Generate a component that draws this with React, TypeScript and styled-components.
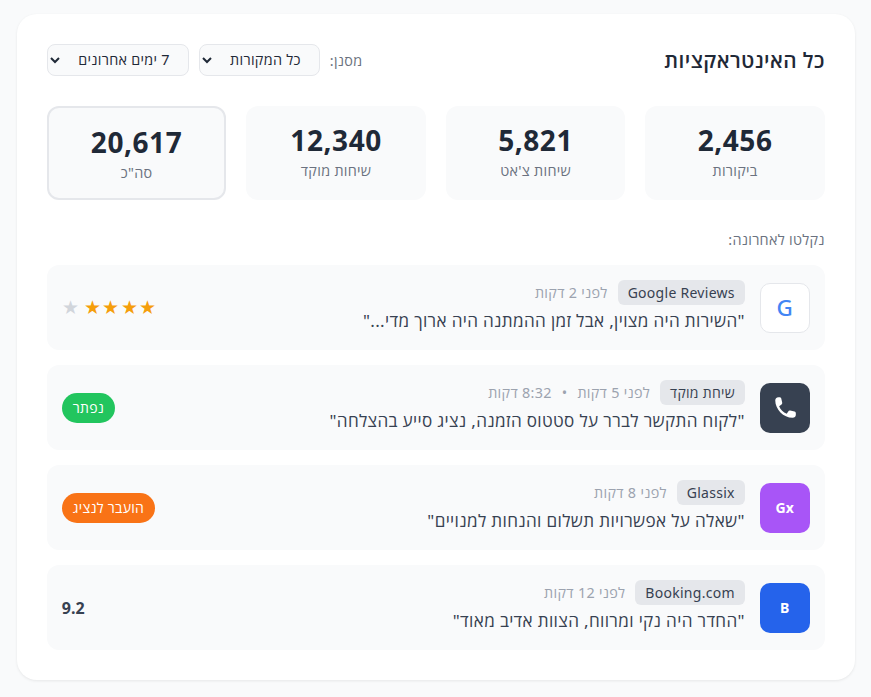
import { createGlobalStyle, styled } from "styled-components";

const Global = createGlobalStyle`
  html, body {
    margin: 0;
    background: #f9fafb;
    font-family: "Noto Sans", "Open Sans", sans-serif;
    color: #1f2937;
  }
  * {
    letter-spacing: 0.02em;
  }
`;

const Page = styled.div`
  padding: 14px 16.2px 16px 16.8px;
`;

const Card = styled.div`
  background: #fff;
  border-radius: 20px;
  padding: 30px;
  box-shadow: 0 1px 3px rgba(0, 0, 0, 0.08);
`;

const Header = styled.div`
  display: flex;
  justify-content: space-between;
  align-items: center;
  margin-bottom: 30px;
`;

const Title = styled.h2`
  margin: 0;
  font-size: 20.8px;
  font-weight: 600;
  color: #1f2937;
`;

const Filters = styled.div`
  display: flex;
  align-items: center;
  gap: 10px;
`;

const FilterLabel = styled.span`
  font-size: 14.4px;
  color: #6b7280;
`;

const Select = styled.select`
  font-family: inherit;
  font-size: 14.4px;
  height: 32px;
  padding: 3px 14px 5px;
  color: #1f2937;
  background: #f9fafb;
  border: 1px solid #e5e7eb;
  border-radius: 8px;
`;

const Stats = styled.div`
  display: grid;
  grid-template-columns: repeat(4, 1fr);
  gap: 20px;
  margin-bottom: 30px;
`;

const Stat = styled.div<{ $total?: boolean }>`
  height: 94px;
  box-sizing: border-box;
  padding-top: 15px;
  display: flex;
  flex-direction: column;
  align-items: center;
  background: #f9fafb;
  border-radius: 12px;
  border: ${(p) => (p.$total ? "2px solid #e5e7eb" : "none")};
`;

const StatValue = styled.div`
  font-size: 28px;
  line-height: 38px;
  font-weight: 700;
  color: #1f2937;
  margin-bottom: 2px;
`;

const StatLabel = styled.div`
  font-size: 14.4px;
  line-height: 20px;
  color: #6b7280;
`;

const SectionLabel = styled.div`
  font-size: 14.4px;
  line-height: 20px;
  color: #6b7280;
  margin-bottom: 15px;
`;

const List = styled.div`
  display: flex;
  flex-direction: column;
  gap: 15px;
`;

const Row = styled.div`
  height: 85px;
  box-sizing: border-box;
  display: flex;
  align-items: center;
  gap: 15px;
  padding: 15px;
  background: #f9fafb;
  border-radius: 12px;
`;

const SourceIcon = styled.div<{ $bg: string; $color: string; $size: number; $weight: number; $border?: boolean }>`
  width: 50px;
  height: 50px;
  flex: none;
  box-sizing: border-box;
  display: flex;
  align-items: center;
  justify-content: center;
  border-radius: 10px;
  font-weight: ${(p) => p.$weight};
  font-size: ${(p) => p.$size}px;
  background: ${(p) => p.$bg};
  color: ${(p) => p.$color};
  border: ${(p) => (p.$border ? "1px solid #e5e7eb" : "none")};
`;

const Body = styled.div`
  flex: 1;
  min-width: 0;
  align-self: flex-start;
`;

const Meta = styled.div`
  display: flex;
  align-items: center;
  gap: 10px;
  margin-bottom: 4px;
`;

const Chip = styled.span`
  font-size: 14px;
  line-height: 19px;
  padding: 3px 10px;
  background: #e5e7eb;
  color: #374151;
  border-radius: 6px;
`;

const Time = styled.span`
  font-size: 14.4px;
  color: #9ca3af;
`;

const Quote = styled.div`
  font-size: 17.1px;
  line-height: 24px;
  color: #374151;
`;

const Stars = styled.div`
  display: flex;
  align-items: center;
  gap: 5px;
  font-size: 19px;
  line-height: 1;
  color: #f59e0b;
`;

const FullStars = styled.span`
  letter-spacing: 1.2px;
`;

const EmptyStar = styled.span`
  color: #d1d5db;
`;

const Badge = styled.span<{ $bg: string }>`
  font-size: 14px;
  line-height: 20px;
  padding: 5px 11px;
  color: #fff;
  background: ${(p) => p.$bg};
  border-radius: 15px;
`;

const Score = styled.span`
  font-size: 16px;
  font-weight: 700;
  color: #374151;
  letter-spacing: 0;
`;

function PhoneIcon() {
  return (
    <svg width="26" height="26" viewBox="0 0 24 24" fill="currentColor" aria-hidden="true">
      <path d="M6 2C4 2 3 3.2 3 5c0 8 7.5 16 16 16 1.8 0 3-1 3-2.8v-1.4c0-.8-.5-1.4-1.2-1.6l-4-.8c-.8-.2-1.4.2-1.8.8l-1.4 2.2c-3.2-1.2-5.8-3.8-7-7l2.2-1.6c.6-.5.8-1.1.6-1.8l-.8-3.6C8.4 2.5 7.8 2 7 2Z" />
    </svg>
  );
}

export default function App() {
  return (
    <Page dir="rtl">
      <Global />
      <Card>
        <Header>
          <Title>כל האינטראקציות</Title>
          <Filters>
            <FilterLabel>מסנן:</FilterLabel>
            <Select>
              <option>כל המקורות</option>
            </Select>
            <Select>
              <option>7 ימים אחרונים</option>
            </Select>
          </Filters>
        </Header>
        <Stats>
          <Stat>
            <StatValue>2,456</StatValue>
            <StatLabel>ביקורות</StatLabel>
          </Stat>
          <Stat>
            <StatValue>5,821</StatValue>
            <StatLabel>שיחות צ'אט</StatLabel>
          </Stat>
          <Stat>
            <StatValue>12,340</StatValue>
            <StatLabel>שיחות מוקד</StatLabel>
          </Stat>
          <Stat $total>
            <StatValue>20,617</StatValue>
            <StatLabel>סה"כ</StatLabel>
          </Stat>
        </Stats>
        <SectionLabel>נקלטו לאחרונה:</SectionLabel>
        <List>
          <Row>
            <SourceIcon $bg="#fff" $color="#4285f4" $size={22.4} $weight={500} $border>
              G
            </SourceIcon>
            <Body>
              <Meta>
                <Chip>Google Reviews</Chip>
                <Time>לפני 2 דקות</Time>
              </Meta>
              <Quote>"השירות היה מצוין, אבל זמן ההמתנה היה ארוך מדי..."</Quote>
            </Body>
            <Stars>
              <FullStars>★★★★</FullStars>
              <EmptyStar>★</EmptyStar>
            </Stars>
          </Row>
          <Row>
            <SourceIcon $bg="#374151" $color="#fff" $size={24} $weight={400}>
              <PhoneIcon />
            </SourceIcon>
            <Body>
              <Meta>
                <Chip>שיחת מוקד</Chip>
                <Time>לפני 5 דקות</Time>
                <Time>•</Time>
                <Time>8:32 דקות</Time>
              </Meta>
              <Quote>"לקוח התקשר לברר על סטטוס הזמנה, נציג סייע בהצלחה"</Quote>
            </Body>
            <Badge $bg="#22c55e">נפתר</Badge>
          </Row>
          <Row>
            <SourceIcon $bg="#a855f7" $color="#fff" $size={14} $weight={700}>
              Gx
            </SourceIcon>
            <Body>
              <Meta>
                <Chip>Glassix</Chip>
                <Time>לפני 8 דקות</Time>
              </Meta>
              <Quote>"שאלה על אפשרויות תשלום והנחות למנויים"</Quote>
            </Body>
            <Badge $bg="#f97316">הועבר לנציג</Badge>
          </Row>
          <Row>
            <SourceIcon $bg="#2563eb" $color="#fff" $size={14} $weight={700}>
              B
            </SourceIcon>
            <Body>
              <Meta>
                <Chip>Booking.com</Chip>
                <Time>לפני 12 דקות</Time>
              </Meta>
              <Quote>"החדר היה נקי ומרווח, הצוות אדיב מאוד"</Quote>
            </Body>
            <Score>9.2</Score>
          </Row>
        </List>
      </Card>
    </Page>
  );
}
